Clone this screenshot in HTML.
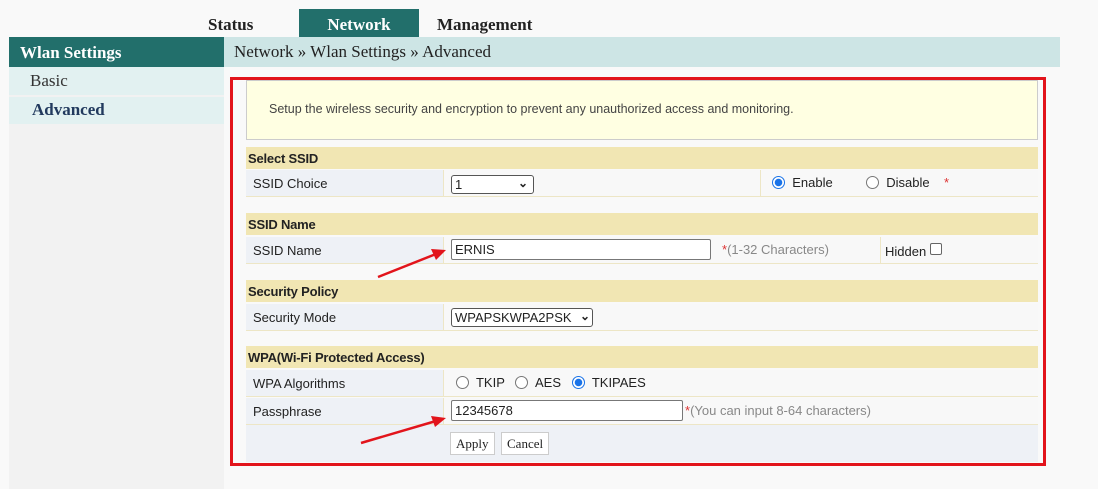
<!DOCTYPE html>
<html><head><style>
*{margin:0;padding:0;box-sizing:border-box}
body{width:1098px;height:489px;background:#f9f9f9;position:relative;overflow:hidden;font-family:"Liberation Sans",Arial,sans-serif;font-size:13px;color:#222}
.a{position:absolute}
.serif{font-family:"Liberation Serif",serif}
.hd{position:absolute;left:246px;width:792px;height:22px;background:#f1e6b3;font-weight:bold;font-size:13px;padding:4px 2px;letter-spacing:-0.2px}
.row{position:absolute;left:246px;width:792px;height:27px;background:#f8f8f8;border-bottom:1px solid #ede6c6}
.lab{position:absolute;left:0;top:0;width:198px;height:100%;background:#eef1f6;border-right:1px solid #ede6c6;padding:6px 7px}
.cell{position:absolute;top:0;height:100%;border-right:1px solid #ede6c6}
.inp{position:absolute;background:#fff;border:1px solid #777;border-radius:2px;font-size:13px;padding:2px 3px;height:21px}
.sel{position:absolute;background:#fff;border:1px solid #555;border-radius:3px;font-size:13px;padding:1px 3px;height:19px}
.radio{display:inline-block;width:13px;height:13px;border:1px solid #777;border-radius:50%;vertical-align:-2px;background:#fff}
.radio.on{border:1.5px solid #1a73e8;background:radial-gradient(circle,#1a73e8 3.5px,#fff 4px)}
.btn{position:absolute;top:432px;height:23px;background:#fff;border:1px solid #ccc;font-family:"Liberation Serif",serif;font-size:13px;padding:3px 5px}
.chev{position:absolute;right:5px;top:0px;font-size:12px;font-weight:bold}
</style></head><body>
<div class="a serif" style="left:208px;top:15px;font-weight:bold;font-size:17px">Status</div>
<div class="a serif" style="left:299px;top:9px;width:120px;height:28px;background:#226f6b;color:#fff;font-weight:bold;font-size:17px;text-align:center;padding-top:6px">Network</div>
<div class="a serif" style="left:437px;top:15px;font-weight:bold;font-size:17px">Management</div>
<div class="a serif" style="left:9px;top:37px;width:215px;height:30px;background:#226f6b;color:#fff;font-weight:bold;font-size:17px;padding:6px 11px">Wlan Settings</div>
<div class="a serif" style="left:224px;top:37px;width:836px;height:30px;background:#cde5e5;font-size:17px;padding:5px 10px">Network » Wlan Settings » Advanced</div>
<div class="a" style="left:9px;top:67px;width:215px;height:422px;background:#f2f2f2"></div>
<div class="a serif" style="left:9px;top:67px;width:215px;height:28px;background:#e2f1f1;font-size:17px;padding:4px 21px;color:#333">Basic</div>
<div class="a serif" style="left:9px;top:97px;width:215px;height:27px;background:#e2f1f1;font-size:17px;padding:3px 23px;font-weight:bold;color:#223a5e">Advanced</div>

<div class="a" style="left:230px;top:77px;width:816px;height:389px;border:3px solid #e2141b"></div>
<div class="a" style="left:246px;top:80px;width:792px;height:60px;background:#ffffe2;border:1px solid #ccc;color:#444;padding:21px 22px;font-size:12.5px">Setup the wireless security and encryption to prevent any unauthorized access and monitoring.</div>

<div class="hd" style="top:147px">Select SSID</div>
<div class="row" style="top:170px"><div class="lab">SSID Choice</div>
<div class="cell" style="left:199px;width:316px"><div class="sel" style="left:6px;top:5px;width:83px">1<span class="chev">&#8964;</span></div></div>
<div class="a" style="left:526px;top:5px;white-space:nowrap"><span class="radio on"></span>&nbsp; Enable</div>
<div class="a" style="left:620px;top:5px;white-space:nowrap"><span class="radio"></span>&nbsp; Disable &nbsp; &nbsp;<span style="color:#d33">*</span></div></div>

<div class="hd" style="top:213px">SSID Name</div>
<div class="row" style="top:237px"><div class="lab">SSID Name</div>
<div class="cell" style="left:199px;width:436px"><div class="inp" style="left:6px;top:2px;width:260px">ERNIS</div>
<div class="a" style="left:277px;top:5px;color:#888"><span style="color:#d33">*</span>(1-32 Characters)</div></div>
<div class="a" style="left:639px;top:6px">Hidden <span style="display:inline-block;width:12px;height:12px;border:1px solid #666;border-radius:2px;background:#fff;vertical-align:1px"></span></div></div>

<div class="hd" style="top:280px">Security Policy</div>
<div class="row" style="top:304px"><div class="lab">Security Mode</div>
<div class="cell" style="left:199px;width:593px;border:0"><div class="sel" style="left:6px;top:4px;width:142px;padding-right:14px;overflow:hidden;white-space:nowrap">WPAPSKWPA2PSK<span class="chev" style="right:2px">&#8964;</span></div></div></div>

<div class="hd" style="top:346px">WPA(Wi-Fi Protected Access)</div>
<div class="row" style="top:370px"><div class="lab">WPA Algorithms</div>
<div class="a" style="left:210px;top:5px"><span class="radio"></span>&nbsp; TKIP &nbsp; <span class="radio"></span>&nbsp; AES &nbsp; <span class="radio on"></span>&nbsp; TKIPAES</div></div>
<div class="row" style="top:398px"><div class="lab">Passphrase</div>
<div class="cell" style="left:199px;width:593px;border:0"><div class="inp" style="left:6px;top:2px;width:232px">12345678</div>
<div class="a" style="left:240px;top:5px;color:#888;white-space:nowrap"><span style="color:#d33">*</span>(You can input 8-64 characters)</div></div></div>
<div class="a" style="left:246px;top:425px;width:792px;height:37px;background:#eef1f6"></div>
<div class="btn" style="left:450px">Apply</div>
<div class="btn" style="left:501px">Cancel</div>

<svg class="a" style="left:0;top:0" width="1098" height="489">
<g stroke="#e2141b" stroke-width="2.5" fill="#e2141b">
<line x1="378" y1="277" x2="436" y2="254"/>
<polygon points="446,250 431,249 436,260" stroke="none"/>
<line x1="361" y1="443" x2="436" y2="421"/>
<polygon points="446,418 431,416 435,427" stroke="none"/>
</g></svg>
</body></html>
